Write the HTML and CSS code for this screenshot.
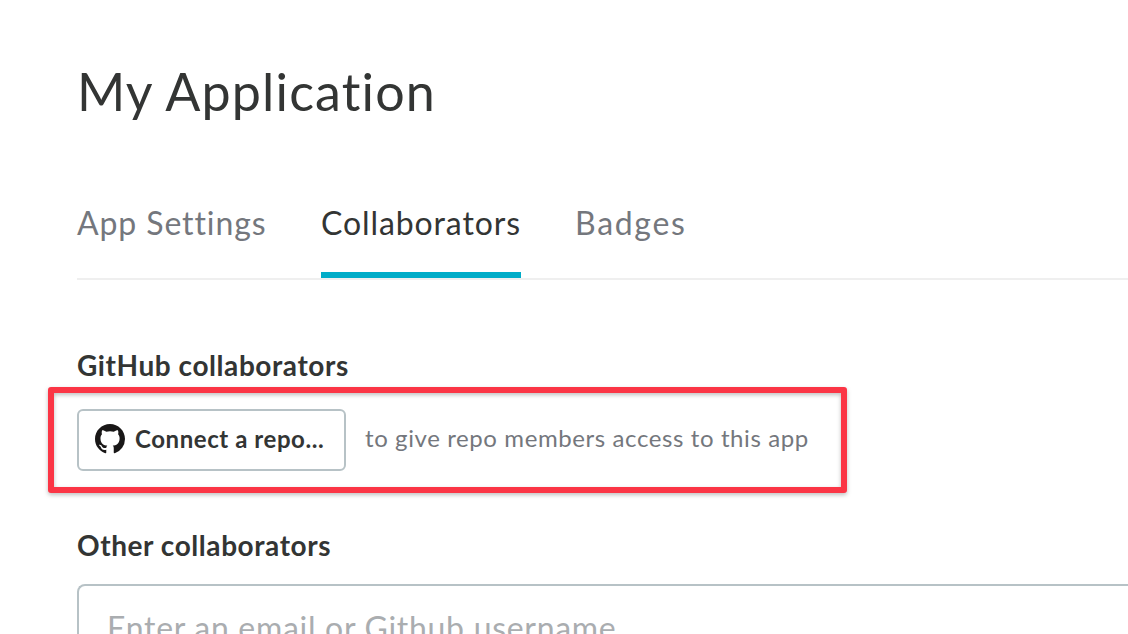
FILE: index.html
```
<!DOCTYPE html>
<html lang="en">
<head>
<meta charset="utf-8">
<title>My Application</title>
<link rel="stylesheet" href="styles.css">
</head>
<body>
<main class="page">
  <h1 class="title"><span>My Application</span></h1>
  <nav class="tabs">
    <a class="tab tab-settings">App Settings</a>
    <a class="tab tab-active">Collaborators</a>
    <a class="tab tab-badges">Badges</a>
  </nav>
  <section class="section">
    <h2 class="heading heading-github"><span>GitHub collaborators</span></h2>
    <div class="connect">
      <button class="button" type="button">
        <svg class="mark" viewBox="0 0 16 16" aria-hidden="true"><path fill="#191717" fill-rule="evenodd" d="M8 0C3.58 0 0 3.58 0 8c0 3.54 2.29 6.53 5.47 7.59.4.07.55-.17.55-.38 0-.19-.01-.82-.01-1.49-2.01.37-2.53-.49-2.69-.94-.09-.23-.48-.94-.82-1.13-.28-.15-.68-.52-.01-.53.63-.01 1.08.58 1.23.82.72 1.21 1.87.87 2.33.66.07-.52.28-.87.51-1.07-1.78-.2-3.64-.89-3.64-3.95 0-.87.31-1.59.82-2.15-.08-.2-.36-1.02.08-2.12 0 0 .67-.21 2.2.82.64-.18 1.32-.27 2-.27s1.36.09 2 .27c1.53-1.04 2.2-.82 2.2-.82.44 1.1.16 1.92.08 2.12.51.56.82 1.27.82 2.15 0 3.07-1.87 3.75-3.65 3.95.29.25.54.73.54 1.48 0 1.07-.01 1.93-.01 2.2 0 .21.15.46.55.38A8.01 8.01 0 0 0 16 8c0-4.42-3.58-8-8-8z"/></svg>
        <span class="button-label">Connect a repo...</span>
      </button>
      <span class="hint">to give repo members access to this app</span>
    </div>
  </section>
  <section class="section section-other">
    <h2 class="heading heading-other"><span>Other collaborators</span></h2>
    <div class="field"><span class="placeholder">Enter an email or Github username</span></div>
  </section>
</main>
</body>
</html>
```
FILE: styles.css
```
* { box-sizing: border-box; }
html, body { margin: 0; height: 100%; overflow: hidden; background: #fff; }
body { font-family: Lato, "Open Sans", sans-serif; color: #333534; }
.page { height: 634px; padding: 61px 0 0 77px; overflow: hidden; }
.title { margin: 0; font-size: 52px; line-height: 60px; font-weight: 400; letter-spacing: 1.15px; white-space: nowrap; }
.tabs { display: flex; gap: 56px; height: 159px; padding-top: 82px; border-bottom: 2px solid #efefef; }
.tab { font-size: 32px; line-height: 40px; height: 75px; color: #74777d; white-space: nowrap; letter-spacing: .9px; }
.tab-settings { width: 188px; }
.tab-active { width: 200px; color: #333534; border-bottom: 6px solid #00acc8; }
.tab-badges { margin-left: -2px; letter-spacing: 1.7px; }
.section { padding-top: 68px; }
.heading { margin: 0; font-size: 28px; line-height: 34px; font-weight: 700; letter-spacing: .57px; white-space: nowrap; }
.connect { position: relative; display: flex; align-items: center; gap: 20px; width: 741px; margin-top: 27px; }
.connect::after { content: ""; position: absolute; inset: -22px -29px -22px -29px; border: 6px solid #fb3545; border-radius: 3px; filter: drop-shadow(0 2px 2px rgba(0, 0, 0, .25)); pointer-events: none; }
.button { display: flex; align-items: center; gap: 10px; width: 269px; height: 62px; padding: 0 0 2px 16px; border: 2px solid #b7c2c6; border-radius: 6px; background: #fff; color: #333534; font: 700 24px/30px Lato, sans-serif; letter-spacing: .57px; white-space: nowrap; }
.mark { width: 30px; height: 30px; flex: none; }
.hint { margin-left: -1px; font-size: 24px; line-height: 30px; color: #74777d; padding-bottom: 5px; letter-spacing: .6px; white-space: nowrap; }
.section-other { padding-top: 57px; }
.field { height: 90px; margin-top: 22px; padding: 22px 0 0 28px; border: 2px solid #b7c2c6; border-right: 0; border-radius: 8px 0 0 8px; }
.placeholder { display: block; font-size: 32px; line-height: 40px; color: #aaadb0; letter-spacing: .7px; white-space: nowrap; }
```
